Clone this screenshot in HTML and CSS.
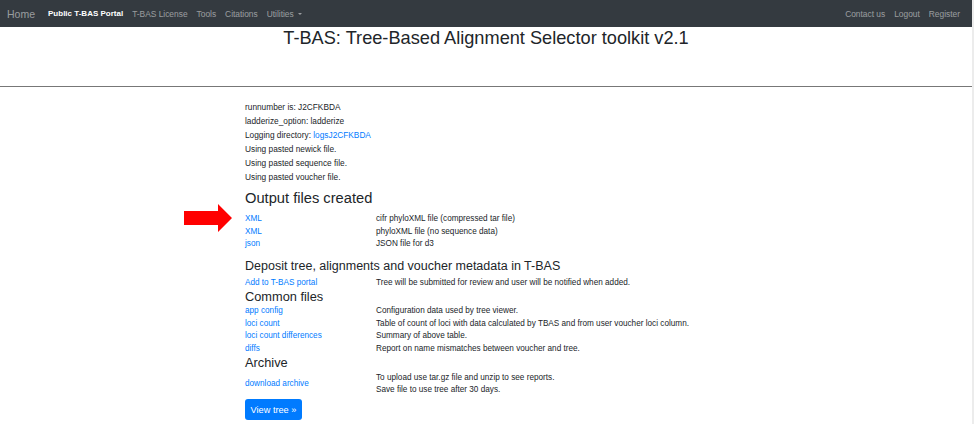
FILE: index.html
```html
<!DOCTYPE html>
<html>
<head>
<meta charset="utf-8">
<link rel="stylesheet" href="styles.css">
</head>
<body>
<div class="page">
  <nav class="navbar">
    <a class="brand">Home</a>
    <ul class="nav-left">
      <li class="active">Public T-BAS Portal</li>
      <li>T-BAS License</li>
      <li>Tools</li>
      <li>Citations</li>
      <li class="dropdown">Utilities <span class="caret"></span></li>
    </ul>
    <ul class="nav-right">
      <li>Contact us</li>
      <li>Logout</li>
      <li>Register</li>
    </ul>
  </nav>
  <header class="jumbo">
    <h1>T-BAS: Tree-Based Alignment Selector toolkit v2.1</h1>
  </header>
  <hr class="divider">
  <main class="content">
    <div class="arrow-wrap">
      <svg class="arrow" width="48" height="28" viewBox="0 0 48 28"><polygon points="0,7 34,7 34,0 48,14 34,28 34,21 0,21" fill="#f00"/></svg>
    </div>
    <div class="log">
      <p>runnumber is: J2CFKBDA</p>
      <p>ladderize_option: ladderize</p>
      <p>Logging directory: <a>logsJ2CFKBDA</a></p>
      <p>Using pasted newick file.</p>
      <p>Using pasted sequence file.</p>
      <p>Using pasted voucher file.</p>
    </div>

    <h2 class="h-output">Output files created</h2>
    <div class="rows">
      <a>XML</a><span>cifr phyloXML file (compressed tar file)</span>
      <a>XML</a><span>phyloXML file (no sequence data)</span>
      <a>json</a><span>JSON file for d3</span>
    </div>

    <h3 class="h-deposit">Deposit tree, alignments and voucher metadata in T-BAS</h3>
    <div class="rows">
      <a>Add to T-BAS portal</a><span>Tree will be submitted for review and user will be notified when added.</span>
    </div>
    <h3 class="h-common">Common files</h3>
    <div class="rows">
      <a>app config</a><span>Configuration data used by tree viewer.</span>
      <a>loci count</a><span>Table of count of loci with data calculated by TBAS and from user voucher loci column.</span>
      <a>loci count differences</a><span>Summary of above table.</span>
      <a>diffs</a><span>Report on name mismatches between voucher and tree.</span>
    </div>
    <h3 class="h-common">Archive</h3>
    <div class="rows archive">
      <a>download archive</a><span>To upload use tar.gz file and unzip to see reports.<br>Save file to use tree after 30 days.</span>
    </div>
    <button class="btn">View tree »</button>
  </main>
</div>
</body>
</html>
```

FILE: styles.css
```css
html, body {
  margin: 0;
  padding: 0;
  background: #fff;
}
body {
  font-family: "Liberation Sans", Arial, sans-serif;
  color: #212529;
  overflow: hidden;
}
.page {
  width: 972px;
  min-height: 424px;
  border-right: 2px solid #ececec;
}
.navbar {
  height: 27px;
  background: #343a40;
  display: flex;
  align-items: center;
  padding: 0 12px 0 7px;
  box-sizing: border-box;
}
.brand {
  font-size: 10.5px;
  color: rgba(255,255,255,0.5);
  margin-right: 13px;
}
.navbar ul {
  list-style: none;
  margin: 0;
  padding: 0;
  display: flex;
  gap: 9px;
  font-size: 8.4px;
  color: rgba(255,255,255,0.5);
}
.navbar .active {
  color: #fff;
  font-weight: bold;
  font-size: 8px;
}
.navbar .nav-right {
  margin-left: auto;
}
.caret {
  display: inline-block;
  width: 0;
  height: 0;
  border-left: 2.5px solid transparent;
  border-right: 2.5px solid transparent;
  border-top: 2.5px solid rgba(255,255,255,0.5);
  vertical-align: 2px;
  margin-left: 2px;
}
.jumbo {
  height: 59px;
  text-align: center;
}
.jumbo h1 {
  margin: 0;
  padding-top: 0;
  font-size: 18.2px;
  font-weight: normal;
  line-height: 22px;
}
.divider {
  margin: 0;
  border: 0;
  border-top: 1px solid #777;
  height: 0;
}
.content {
  position: relative;
  margin-left: 245px;
  padding-top: 13px;
  font-size: 8.2px;
}
.log {
  font-size: 8.3px;
}
.arrow-wrap {
  position: absolute;
  left: -61px;
  top: 117px;
}
.arrow { display: block; }
a {
  color: #007bff;
  text-decoration: none;
}
p {
  margin: 0;
  line-height: 14px;
}
h2, h3 {
  font-weight: 500;
  margin: 0;
}
.h-output {
  font-size: 14.7px;
  line-height: 18px;
  margin-top: 5px;
  margin-bottom: 6px;
}
.rows {
  display: grid;
  grid-template-columns: 131px auto;
  line-height: 12.5px;
}
.h-deposit {
  font-size: 12.5px;
  line-height: 16px;
  margin-top: 7px;
  margin-bottom: 3px;
}
.h-common {
  font-size: 12.8px;
  line-height: 16px;
}
.archive {
  align-items: center;
  line-height: 12px;
  margin-top: 1px;
}
.btn {
  display: block;
  margin-top: 3px;
  background: #007bff;
  color: #fff;
  border: 0;
  border-radius: 3px;
  font-family: inherit;
  font-size: 9.2px;
  width: 57px;
  height: 21px;
  padding: 0;
}
```
